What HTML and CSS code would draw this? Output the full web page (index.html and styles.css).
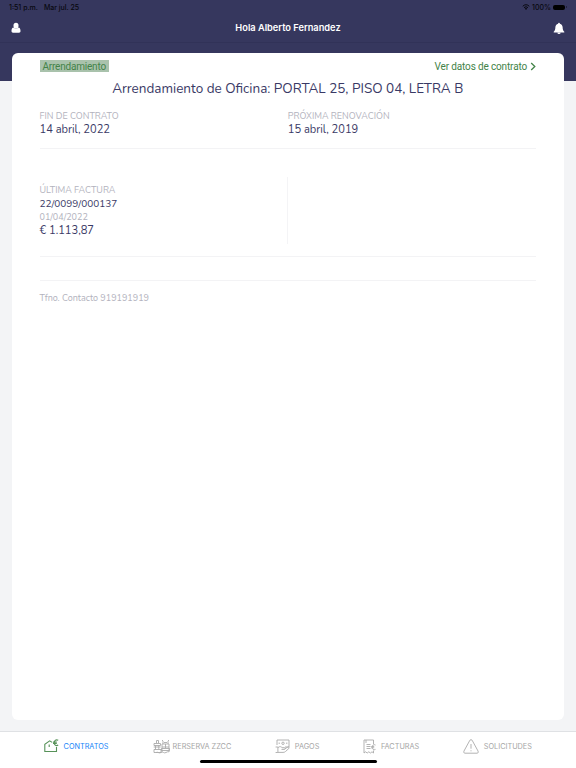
FILE: index.html
```html
<!DOCTYPE html>
<html lang="es">

<head>
    <meta charset="UTF-8">
    <meta name="viewport" content="width=device-width, initial-scale=1.0">
    <title>Contratos</title>
    <link rel="stylesheet" href="styles.css">
</head>

<body>
    <header>
        <div class="status-bar">
            <span class="time">1:51 p.m.</span>
            <span class="date">Mar jul. 25</span>
            <svg class="wifi" viewBox="0 0 16 12">
                <path d="M1.5 4.5a9.5 9.5 0 0 1 13 0M4 7.2a6 6 0 0 1 8 0" />
                <path class="fill" d="M5.5 9.2a4 4 0 0 1 5 0L8 12z" />
            </svg>
            <span class="percent">100%</span>
            <span class="battery"></span>
            <span class="battery-tip"></span>
        </div>
        <div class="navbar">
            <svg class="user" viewBox="0 0 10 12">
                <path d="M5 .7a2.5 2.5 0 0 1 2.500 2.500v1A2.500 2.500 0 0 1 5 6.700a2.500 2.500 0 0 1-2.500-2.500v-1A2.500 2.500 0 0 1 5 .7zM2.200 5.500C3.500 7.400 6.500 7.400 7.800 5.500 9.200 6 9.500 7.600 9.500 9.100c0 1.100-.5 1.700-1.500 1.700H2C1 10.800.5 10.200.5 9.100c0-1.500.3-3.100 1.700-3.600z" />
            </svg>
            <h1>Hola Alberto Fernandez</h1>
            <svg class="bell" viewBox="0 0 12 13">
                <path d="M6 .8c.6 0 .9.4.9.9 1.700.4 2.600 1.700 2.700 3.300.1 2.700.6 3.900 1.700 4.800v.6H.7v-.6C1.800 8.900 2.300 7.700 2.400 5c.1-1.600 1-2.900 2.700-3.300 0-.5.300-.9.900-.9zM4.400 10.700h3.200a1.600 1.400 0 0 1-3.200 0z" />
            </svg>
        </div>
    </header>

    <main>
        <div class="card">
            <div class="card-top">
                <span class="badge">Arrendamiento</span>
                <a class="details" href="#">
                    <span>Ver datos de contrato</span>
                    <svg class="chevron" viewBox="0 0 6 9">
                        <path d="M1.200 1l3.600 3.500L1.200 8" />
                    </svg>
                </a>
            </div>
            <h2>Arrendamiento de Oficina: PORTAL 25, PISO 04, LETRA B</h2>
            <div class="row dates">
                <div class="col">
                    <p class="label">FIN DE CONTRATO</p>
                    <p class="value">14 abril, 2022</p>
                </div>
                <div class="col">
                    <p class="label">PRÓXIMA RENOVACIÓN</p>
                    <p class="value">15 abril, 2019</p>
                </div>
            </div>
            <div class="row invoice">
                <div class="col last-invoice">
                    <p class="label">ÚLTIMA FACTURA</p>
                    <p class="number">22/0099/000137</p>
                    <p class="label day">01/04/2022</p>
                    <p class="value">€ 1.113,87</p>
                </div>
                <div class="col empty"></div>
            </div>
            <div class="spacer"></div>
            <p class="contact">Tfno. Contacto 919191919</p>
        </div>
    </main>

    <footer>
        <nav class="tabs">
            <a class="tab active" href="#">
                <svg class="icon-house" viewBox="0 0 15 14">
                    <path d="M8.200 3.400L5.700 1.800.8 5.200v7.300h11.700V8M5.200 5.500v2.500" />
                    <path d="M14.200 1.300c-2.100-1.200-4 .1-4 2.400s1.900 3.600 4 2.400M9 3.100h3.800M9 4.500h3.800" />
                </svg>
                <span>CONTRATOS</span>
            </a>
            <a class="tab reserve" href="#">
                <svg class="icon-areas" viewBox="0 0 17 15">
                    <path d="M3.500 4V1.500h2V4M1 4.500h6.500v2H1zM2.500 6.500v4M5.800 6.500v4M.7 8h7M1 10.500h7v3H1zM10 5V2l-1-1M15 5V2l1-1M9 5h7v3H9zM11 3.500h3M8.500 9.500h8v2h-8zM3 13.500c2-1 3 1.300 5 0s3 1.300 5 0 3-.5 3-.5M12.500 5v4M9 8v5M16 8v5" />
                </svg>
                <span>RERSERVA ZZCC</span>
            </a>
            <a class="tab payments" href="#">
                <svg class="icon-pay" viewBox="0 0 15 15">
                    <path d="M2 6V1h12v7h-4M4.200 3.500v1.500M11.800 3.500v1.500M.6 8h2.300v5.500H.6M3 8.500c2-1.500 3.200-.8 4 .2h2.500c1 0 1 1.700 0 1.700H6.500M9.800 9.800l3-1.700c1.200-.5 1.900.7 1 1.400l-3.300 3c-.8.7-1.500.9-2.500.9H3" />
                    <circle cx="8" cy="4.300" r="1.200" />
                </svg>
                <span>PAGOS</span>
            </a>
            <a class="tab invoices" href="#">
                <svg class="icon-invoice" viewBox="0 0 13 15">
                    <path d="M10.500 5V1H1v13l1.600-1.200L4.200 14l1.600-1.200L7.400 14 9 12.800l1.500 1.200v-2.500M3 1v3M3.500 5.500h4M3.500 7.500h4M3.500 9.500h4" />
                    <path d="M12.500 6c-1.800-1-3.300.2-3.300 2.200s1.500 3.200 3.300 2.200M8.200 7.600h3M8.200 8.800h3" />
                </svg>
                <span>FACTURAS</span>
            </a>
            <a class="tab requests" href="#">
                <svg class="icon-alert" viewBox="0 0 16 15">
                    <path d="M6.900 1.200q1.100-1.200 2.200 0l6 11q.7 1.800-1 2H1.900q-1.700-.2-1-2zM8 5v4.700M8 11.300v1" />
                </svg>
                <span>SOLICITUDES</span>
            </a>
        </nav>
        <div class="home-indicator"></div>
    </footer>
</body>

</html>
```
FILE: styles.css
```css
* {
    box-sizing: border-box;
}

body {
    display: flex;
    flex-direction: column;
    height: 768px;
    margin: 0;
    background-color: #f3f4f6;
    font-family: Nunito, "Noto Sans", sans-serif;
    color: #393965;
}

h1,
h2,
p {
    margin: 0;
    font-weight: normal;
    white-space: nowrap;
}

a {
    text-decoration: none;
}

svg {
    display: block;
    flex: none;
}

header {
    height: 43px;
    background-color: #36375e;
    border-bottom: 1px solid #313258;
    font-family: Inter, sans-serif;
}

.status-bar {
    display: flex;
    align-items: center;
    height: 14px;
    padding: 0 9px;
    color: #08080f;
    font-size: 7px;
    font-weight: 500;
    white-space: nowrap;
}

.date {
    margin-left: 6px;
}

.wifi {
    width: 8px;
    height: 6px;
    margin-left: auto;
    fill: none;
    stroke: #08080f;
    stroke-width: 2;
}

.wifi .fill {
    fill: #08080f;
    stroke: none;
}

.percent {
    margin-left: 2px;
}

.battery {
    width: 12px;
    height: 5px;
    margin-left: 2px;
    border-radius: 2px;
    background-color: #000;
}

.battery-tip {
    width: 1px;
    height: 2px;
    margin-left: 1px;
    background-color: #22223c;
}

.navbar {
    display: flex;
    align-items: center;
    justify-content: space-between;
    height: 28px;
    padding: 0 11px;
    color: #fff;
}

.navbar svg {
    fill: #fff;
}

.user {
    width: 10px;
    height: 12px;
}

.bell {
    width: 12px;
    height: 13px;
}

h1 {
    padding: 0 0 1px 2px;
    font-size: 9.25px;
    font-weight: 600;
}

main {
    height: 688px;
    padding: 10px 12px 0;
    background: linear-gradient(#36375e, #36375e) no-repeat;
    background-size: 100% 38px;
}

.card {
    height: 667px;
    padding: 6px 28px 0 27.5px;
    border-radius: 6px;
    background-color: #fff;
}

.card-top {
    display: flex;
    align-items: center;
    justify-content: space-between;
    height: 14px;
    font-family: Roboto, sans-serif;
    font-size: 10px;
    color: #438348;
}

.badge {
    height: 12px;
    padding: 0 3px;
    background-color: #a9c2ac;
    letter-spacing: -0.2px;
    line-height: 13px;
}

.details {
    display: flex;
    align-items: center;
    color: #438348;
    letter-spacing: -0.15px;
}

.chevron {
    width: 6px;
    height: 9px;
    margin-left: 3px;
    fill: none;
    stroke: #438348;
    stroke-width: 1.3;
}

h2 {
    margin-top: 6px;
    font-size: 13.5px;
    line-height: 20px;
    text-align: center;
}

.row {
    display: flex;
    border-bottom: 1px solid #f3f3f5;
}

.col {
    width: 50%;
}

.dates {
    height: 50px;
    padding-top: 10px;
}

.label {
    color: #b2b2bd;
    font-size: 9px;
    line-height: 14px;
}

.value {
    font-size: 11.1px;
    line-height: 14px;
}

.invoice {
    height: 108px;
    padding: 28px 0 12px;
}

.last-invoice {
    padding-top: 6px;
    border-right: 1px solid #f4f4f6;
}

.number {
    font-size: 10px;
    line-height: 14px;
}

.day {
    line-height: 13px;
}

.spacer {
    height: 24px;
    border-bottom: 1px solid #f3f3f5;
}

.contact {
    margin-top: 10px;
    color: #b2b2bd;
    font-size: 9px;
    line-height: 15px;
}

footer {
    height: 37px;
    background-color: #fff;
    border-top: 1px solid #dfe1e4;
}

.tabs {
    display: flex;
    justify-content: space-evenly;
    height: 28px;
    font-family: Inter, sans-serif;
    font-size: 7.3px;
}

.tab {
    display: flex;
    align-items: center;
    gap: 4.5px;
    color: #a5a5a5;
    white-space: nowrap;
}

.reserve {
    gap: 3px;
}

.tab svg {
    fill: none;
    stroke: #aaa;
    stroke-width: 0.9;
}

.active {
    color: #1684f8;
}

.active svg {
    stroke: #579259;
    stroke-width: 1.1;
}

.icon-house {
    width: 15px;
    height: 14px;
}

.icon-areas {
    width: 17px;
    height: 15px;
}

.icon-pay {
    width: 15px;
    height: 15px;
}

.icon-invoice {
    width: 13px;
    height: 15px;
}

.icon-alert {
    width: 16px;
    height: 15px;
}

.home-indicator {
    width: 177px;
    height: 3px;
    margin: 0 auto;
    border-radius: 2px;
    background-color: #000;
}
```
